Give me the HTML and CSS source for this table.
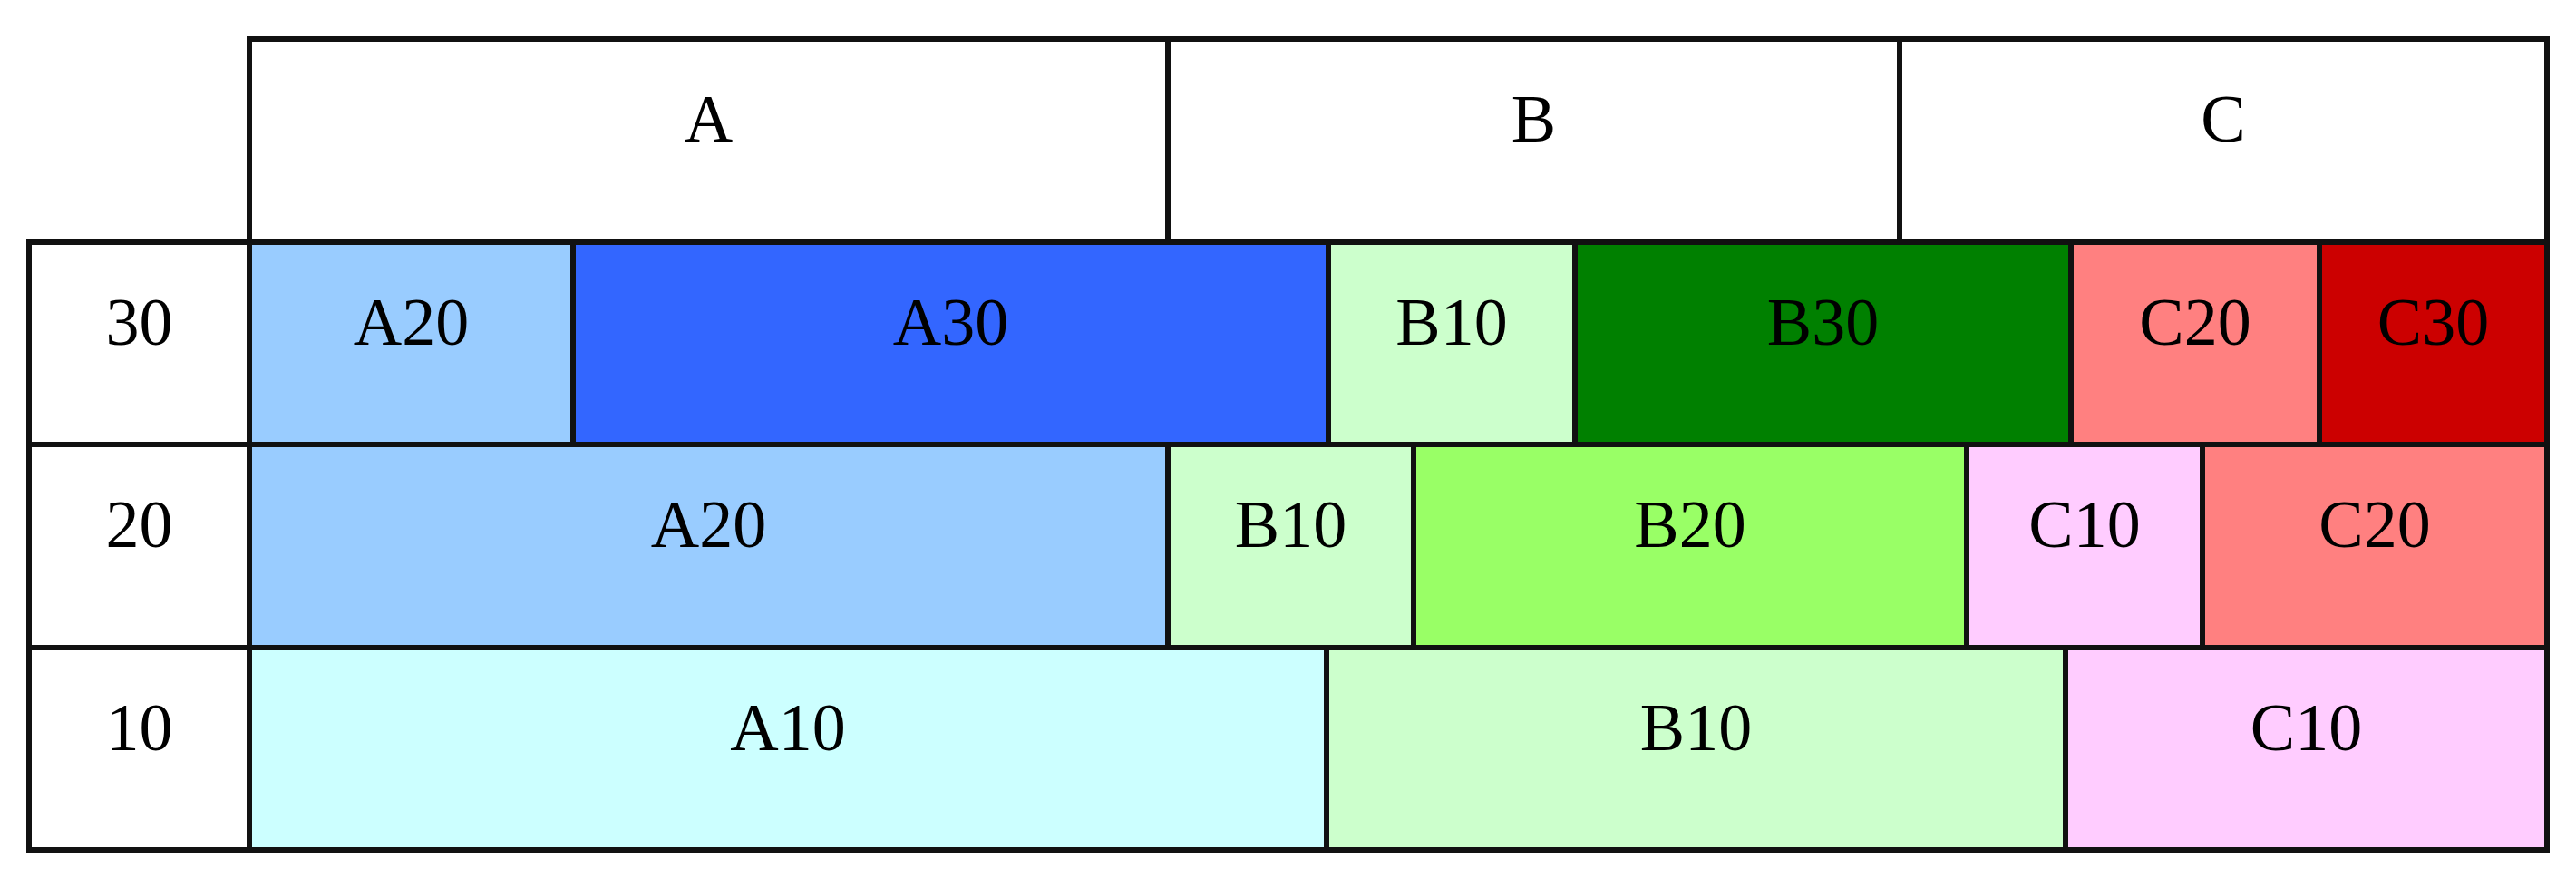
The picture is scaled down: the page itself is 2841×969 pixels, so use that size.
FILE: index.html
```html
<!DOCTYPE html>
<html lang="en">
<head>
    <meta charset="UTF-8">
    <meta name="viewport" content="width=device-width, initial-scale=1.0">
    <title>Layer Chart</title>
    <link rel="stylesheet" href="styles.css">
</head>
<body>
    <div class="chart">
        <div class="row head-row">
            <div class="corner"></div>
            <div class="cell head head-a">A</div>
            <div class="cell head head-b">B</div>
            <div class="cell head head-c">C</div>
        </div>

        <div class="row row-30">
            <div class="cell label">30</div>
            <div class="cell a20 r30-a20">A20</div>
            <div class="cell a30 r30-a30">A30</div>
            <div class="cell b10 r30-b10">B10</div>
            <div class="cell b30 r30-b30">B30</div>
            <div class="cell c20 r30-c20">C20</div>
            <div class="cell c30 r30-c30">C30</div>
        </div>

        <div class="row row-20">
            <div class="cell label">20</div>
            <div class="cell a20 r20-a20">A20</div>
            <div class="cell b10 r20-b10">B10</div>
            <div class="cell b20 r20-b20">B20</div>
            <div class="cell c10 r20-c10">C10</div>
            <div class="cell c20 r20-c20">C20</div>
        </div>

        <div class="row row-10">
            <div class="cell label">10</div>
            <div class="cell a10 r10-a10">A10</div>
            <div class="cell b10 r10-b10">B10</div>
            <div class="cell c10 r10-c10">C10</div>
        </div>
    </div>
</body>
</html>
```

FILE: styles.css
```css
body {
    margin: 0;
    background: #fff;
    font-family: 'Liberation Serif', 'DejaVu Serif', serif;
    color: #000;
}

.chart {
    padding: 40px 0 0 29px;
}

/* rows overlap by one border so lines collapse */
.row {
    display: flex;
    height: 229px;
}

.row + .row {
    margin-top: -6px;
}

.head-row,
.row-20 {
    height: 230px;
}

.corner {
    width: 243px;
    flex: none;
}

.cell {
    flex: none;
    box-sizing: border-box;
    height: 100%;
    border: 6px solid #111;
    background: #fff;
    display: flex;
    align-items: center;
    justify-content: center;
    padding-bottom: 48px;
    font-size: 74px;
    line-height: 1;
}

.cell + .cell {
    margin-left: -6px;
}

.label {
    width: 249px;
}

/* header */
.head-a { width: 1019px; }
.head-b { width: 813px; }
.head-c { width: 720px; }

/* colours */
.a10 { background: #ccffff; }
.a20 { background: #99ccff; }
.a30 { background: #3366ff; }
.b10 { background: #ccffcc; }
.b20 { background: #99ff66; }
.b30 { background: #008000; }
.c10 { background: #ffccff; }
.c20 { background: #ff8080; }
.c30 { background: #cc0000; }

/* row 30 */
.r30-a20 { width: 363px; }
.r30-a30 { width: 839px; }
.r30-b10 { width: 278px; }
.r30-b30 { width: 553px; }
.r30-c20 { width: 280px; }
.r30-c30 { width: 257px; }

/* row 20 */
.r20-a20 { width: 1019px; }
.r20-b10 { width: 277px; }
.r20-b20 { width: 616px; }
.r20-c10 { width: 266px; }
.r20-c20 { width: 386px; }

/* row 10 */
.r10-a10 { width: 1194px; }
.r10-b10 { width: 821px; }
.r10-c10 { width: 537px; }
```
